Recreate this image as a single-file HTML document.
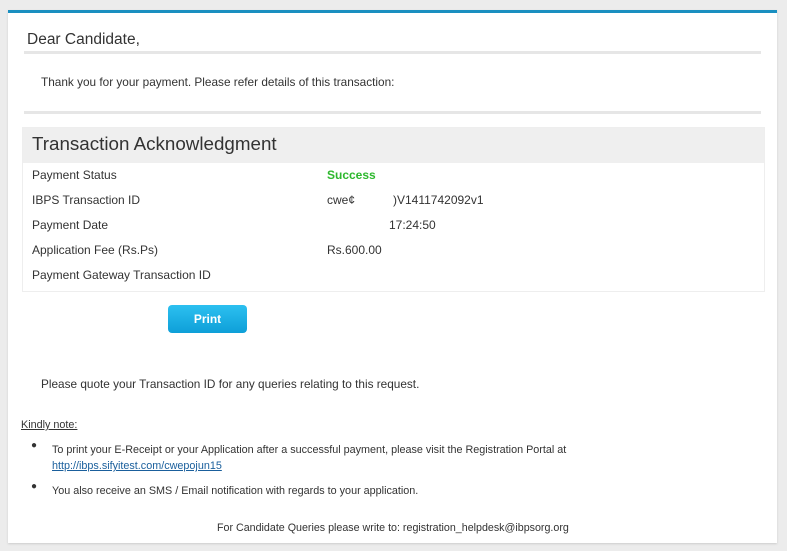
<!DOCTYPE html>
<html><head><meta charset="utf-8"><style>
body{margin:0;width:787px;height:551px;background:#ececec;font-family:"Liberation Sans",sans-serif;color:#333;position:relative;overflow:hidden}
.card{position:absolute;left:8px;top:10px;width:769px;height:530px;background:#fff;border-top:3px solid #1a8fc0;box-shadow:0 1px 2px #ccc}
.a{position:absolute;white-space:nowrap}
.hr{position:absolute;left:24px;width:737px;height:3px;background:#e6e6e6}
.box{position:absolute;left:22px;top:127px;width:741px;height:163px;border:1px solid #eee;background:#fff}
.bh{height:35px;background:#efefef}
.lbl{font-size:12px}
</style></head><body>
<div class="card"></div>
<div class="a" style="left:27px;top:31px;font-size:15.5px;color:#333">Dear Candidate,</div>
<div class="hr" style="top:51px"></div>
<div class="a" style="left:41px;top:75px;font-size:11.8px">Thank you for your payment. Please refer details of this transaction:</div>
<div class="hr" style="top:111px"></div>
<div class="box"><div class="bh"></div></div>
<div class="a" style="left:32px;top:133px;font-size:18.8px;color:#333">Transaction Acknowledgment</div>
<div class="a lbl" style="left:32px;top:168px">Payment Status</div>
<div class="a lbl" style="left:327px;top:168px;color:#2db82d;font-weight:bold">Success</div>
<div class="a lbl" style="left:32px;top:193px">IBPS Transaction ID</div>
<div class="a lbl" style="left:327px;top:193px">cwe¢</div>
<div class="a lbl" style="left:393px;top:193px">)V1411742092v1</div>
<div class="a lbl" style="left:32px;top:218px">Payment Date</div>
<div class="a lbl" style="left:389px;top:218px">17:24:50</div>
<div class="a lbl" style="left:32px;top:243px">Application Fee (Rs.Ps)</div>
<div class="a lbl" style="left:327px;top:243px">Rs.600.00</div>
<div class="a lbl" style="left:32px;top:268px">Payment Gateway Transaction ID</div>
<div class="a" style="left:168px;top:305px;width:79px;height:28px;border-radius:4px;background:linear-gradient(#2cc0f0,#0e9fd8);color:#fff;font-size:12px;font-weight:bold;text-align:center;line-height:28px">Print</div>
<div class="a" style="left:41px;top:377px;font-size:11.8px">Please quote your Transaction ID for any queries relating to this request.</div>
<div class="a" style="left:21px;top:419px;font-size:10.8px;text-decoration:underline">Kindly note:</div>
<div class="a" style="left:31px;top:440px;font-size:10px">&#9679;</div>
<div class="a" style="left:52px;top:444px;font-size:10.8px">To print your E-Receipt or your Application after a successful payment, please visit the Registration Portal at</div>
<div class="a" style="left:52px;top:460px;font-size:10.8px;color:#1a5f9c;text-decoration:underline">http://ibps.sifyitest.com/cwepojun15</div>
<div class="a" style="left:31px;top:481px;font-size:10px">&#9679;</div>
<div class="a" style="left:52px;top:485px;font-size:10.8px">You also receive an SMS / Email notification with regards to your application.</div>
<div class="a" style="left:217px;top:522px;font-size:10.7px">For Candidate Queries please write to: registration_helpdesk@ibpsorg.org</div>
</body></html>
